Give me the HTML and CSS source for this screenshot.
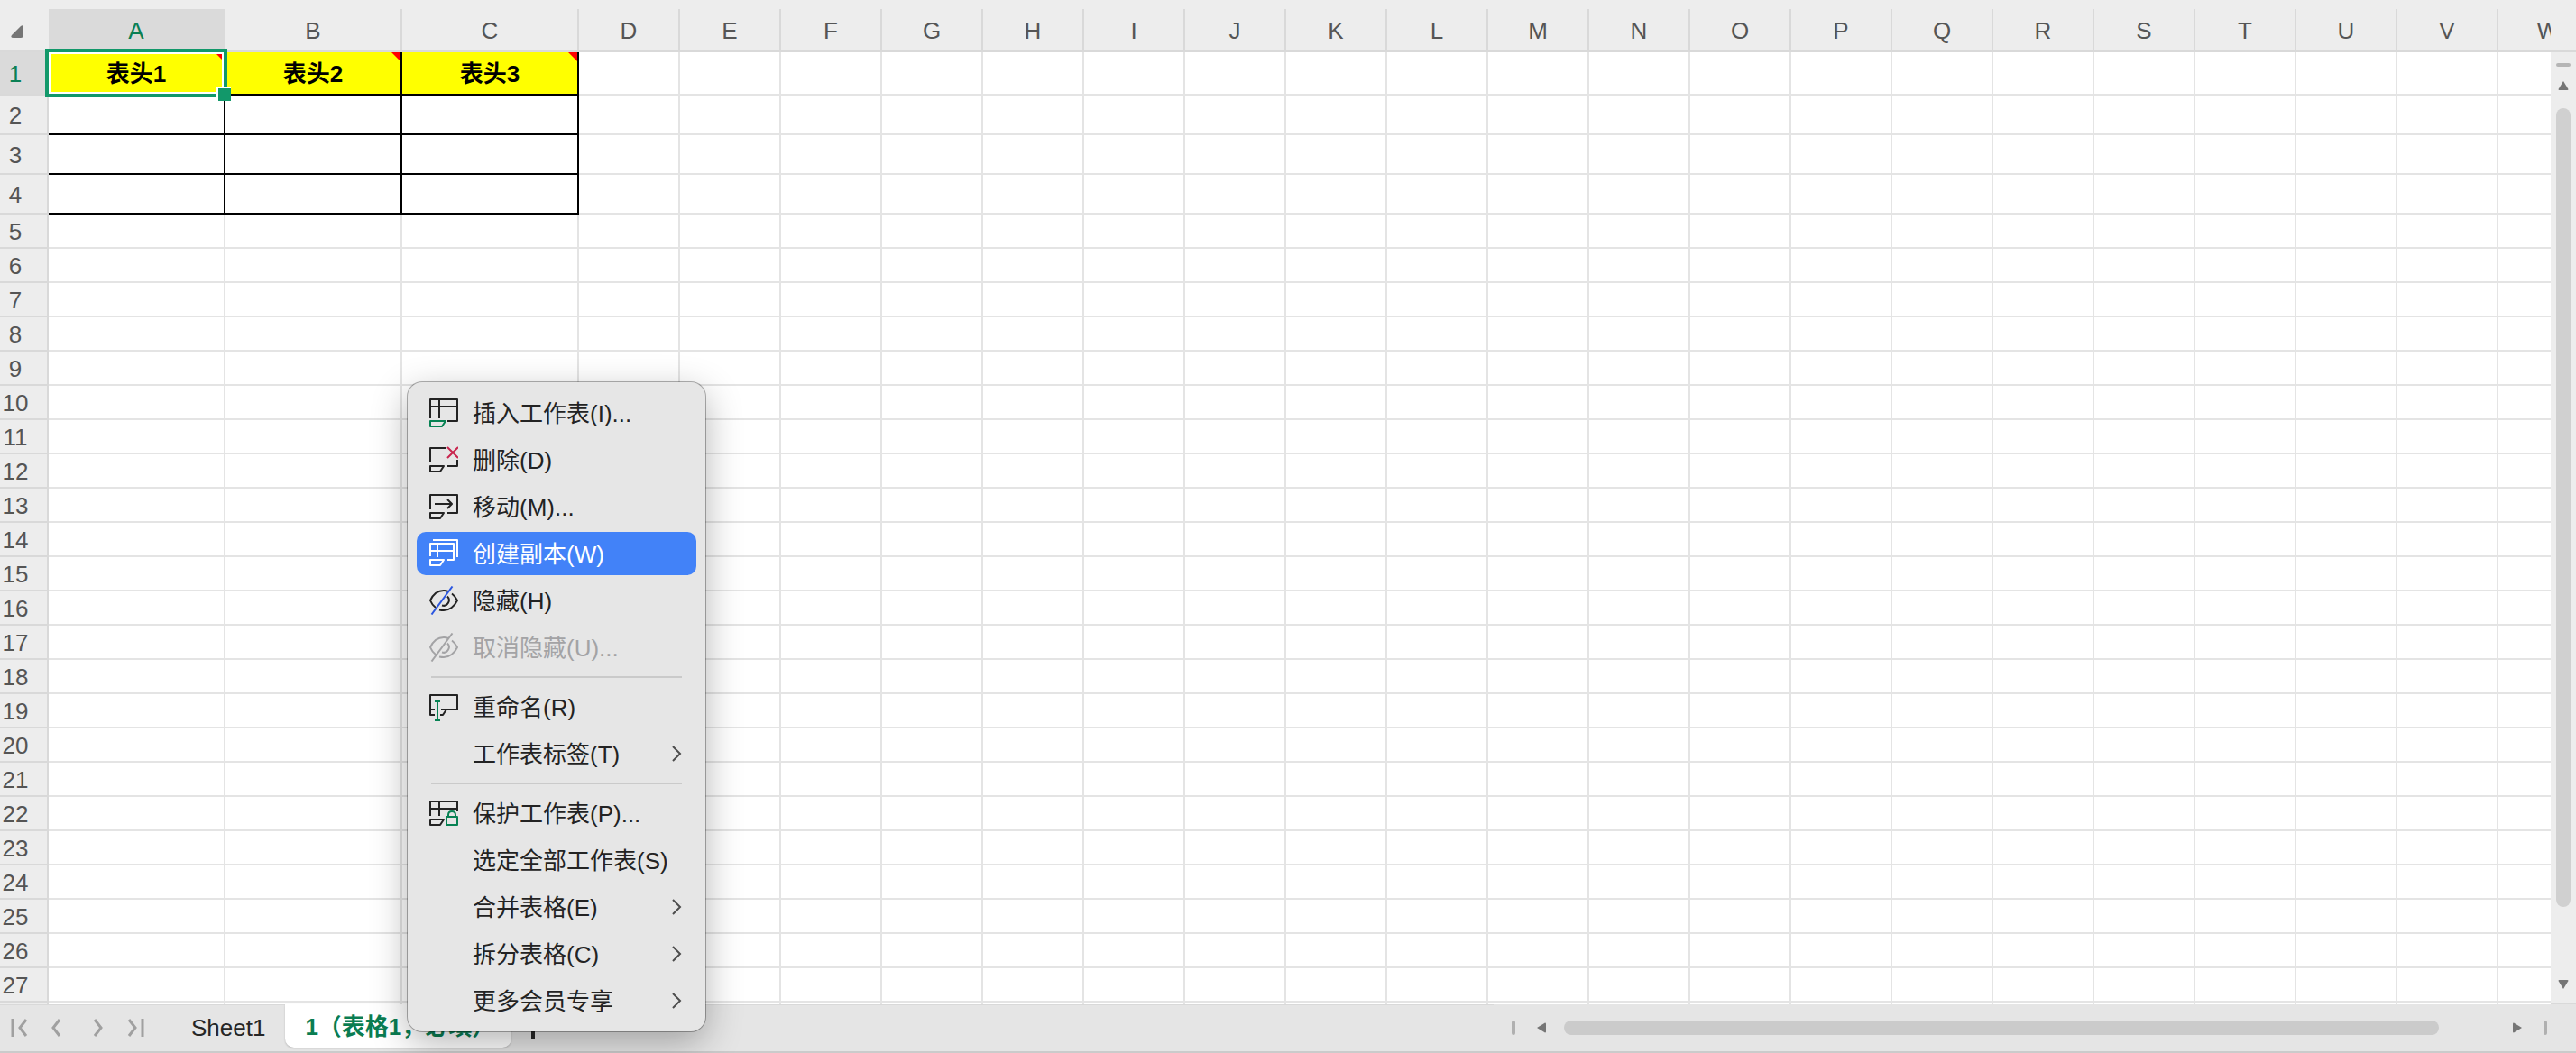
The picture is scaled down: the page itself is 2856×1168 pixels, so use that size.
FILE: index.html
```html
<!DOCTYPE html>
<html lang="zh-CN">
<head>
  <meta charset="UTF-8">
  <meta name="viewport" content="width=device-width, initial-scale=1">
  <title>工作表</title>
  <link rel="stylesheet" href="styles.css">
</head>

<body>

  <div class="workspace">
    <div class="sheet">
      <table class="grid" id="grid">
        <thead>
          <tr id="columnRow">
            <th class="corner">
              <svg width="14" height="14" viewBox="0 0 14 14"><path d="M11 1 Q14 -1 14 3 V11 Q14 14 11 14 H3 Q-1 14 1 11 Z" fill="#757575"/></svg>
            </th>
          </tr>
        </thead>
        <tbody id="rows"></tbody>
      </table>
    </div>

    <div class="vscroll">
      <div class="vscroll-head"></div>
      <div class="vscroll-body">
        <span class="split-h"></span>
        <button class="arrow" aria-label="向上滚动"><svg width="12" height="10" viewBox="0 0 12 10"><path d="M6 0 L11.500 9 Q11.500 10 10.500 10 H1.500 Q0.500 10 0.500 9 Z" fill="#757575"/></svg></button>
        <div class="vtrack"><div class="vthumb"></div></div>
        <button class="arrow" aria-label="向下滚动"><svg width="12" height="10" viewBox="0 0 12 10"><path d="M6 10 L11.500 1 Q11.500 0 10.500 0 H1.500 Q0.500 0 0.500 1 Z" fill="#757575"/></svg></button>
      </div>
    </div>
  </div>

  <div class="bottom-bar">
    <div class="tab-pane">
      <div class="tab-nav">
        <button aria-label="第一个工作表"><svg width="20" height="20" viewBox="0 0 20 20"><path d="M2 0 V20 M17 1 L10 10 L17 19"/></svg></button>
        <button aria-label="上一个工作表"><svg width="20" height="20" viewBox="0 0 20 20"><path d="M12 1 L5 10 L12 19"/></svg></button>
        <button aria-label="下一个工作表"><svg width="20" height="20" viewBox="0 0 20 20"><path d="M9 1 L16 10 L9 19"/></svg></button>
        <button aria-label="最后一个工作表"><svg width="20" height="20" viewBox="0 0 20 20"><path d="M5 1 L12 10 L5 19 M20 0 V20"/></svg></button>
      </div>
      <button class="tab">Sheet1</button>
      <button class="tab active">1（表格1，必填）</button>
      <button class="add-sheet" aria-label="新建工作表"><svg width="24" height="24" viewBox="0 0 24 24"><path d="M12 0 V24 M0 12 H24" stroke="#262626" stroke-width="4"/></svg></button>
    </div>
    <div class="hscroll">
      <span class="split-v"></span>
      <button class="arrow" aria-label="向左滚动"><svg width="10" height="12" viewBox="0 0 10 12"><path d="M0 6 L9 0.500 Q10 0.500 10 1.500 V10.500 Q10 11.500 9 11.500 Z" fill="#757575"/></svg></button>
      <div class="htrack"><div class="hthumb"></div></div>
      <button class="arrow" aria-label="向右滚动"><svg width="10" height="12" viewBox="0 0 10 12"><path d="M10 6 L1 0.500 Q0 0.500 0 1.500 V10.500 Q0 11.500 1 11.500 Z" fill="#757575"/></svg></button>
      <span class="split-v"></span>
    </div>
  </div>

  <div class="menu" role="menu">
    <button class="menu-item" role="menuitem">
      <svg class="icon" viewBox="0 0 32 32"><path d="M1 22 V1 H31 V25 H20 M1 9 H31 M11 1 V22"/><path class="green" d="M1 25 H18 L14 31 H1 Z"/></svg>
      <span>插入工作表(I)...</span>
    </button>
    <button class="menu-item" role="menuitem">
      <svg class="icon" viewBox="0 0 32 32"><path d="M1 19 V3 H18 M31 16 V23 H20 M1 23 H16 L12 29 H1 Z"/><path class="red" d="M20 2 L32 14 M32 2 L20 14"/></svg>
      <span>删除(D)</span>
    </button>
    <button class="menu-item" role="menuitem">
      <svg class="icon" viewBox="0 0 32 32"><path d="M1 19 V3 H31 V23 H20 M1 23 H16 L12 29 H1 Z M6 13 H25 M20 8 L25 13 L20 18"/></svg>
      <span>移动(M)...</span>
    </button>
    <button class="menu-item selected" role="menuitem">
      <svg class="icon" viewBox="0 0 32 32"><path d="M4 1 H31 V20 M1 19 V5 H27 V23 H20 M1 13 H27 M9 5 V20 M1 23 H16 L12 29 H1 Z"/></svg>
      <span>创建副本(W)</span>
    </button>
    <button class="menu-item" role="menuitem">
      <svg class="icon" viewBox="0 0 32 32"><path d="M21 6 Q18.500 5 16 5 C9 5 4 9.500 1 16 Q3 21 7 24 M25 8.500 Q29 11.500 31 16 C28 22.500 22 27 16 27 Q13.500 27 11 26.500 M20 11.500 A6 6 0 0 1 14 21.500"/><path class="blue" d="M25.500 0.500 L2.500 31.500"/></svg>
      <span>隐藏(H)</span>
    </button>
    <button class="menu-item" role="menuitem" disabled>
      <svg class="icon" viewBox="0 0 32 32"><path d="M21 6 Q18.500 5 16 5 C9 5 4 9.500 1 16 Q3 21 7 24 M25 8.500 Q29 11.500 31 16 C28 22.500 22 27 16 27 Q13.500 27 11 26.500 M20 11.500 A6 6 0 0 1 14 21.500 M25.500 0.500 L2.500 31.500"/></svg>
      <span>取消隐藏(U)...</span>
    </button>
    <hr>
    <button class="menu-item" role="menuitem">
      <svg class="icon" viewBox="0 0 32 32"><path d="M6 25 H1 V3 H31 V19 H13 M19 19 L15 25 H12 M1 19 H6"/><path class="green" d="M9 10 V31 M6 10 H12 M6 31 H12"/></svg>
      <span>重命名(R)</span>
    </button>
    <button class="menu-item" role="menuitem">
      <i class="icon"></i>
      <span>工作表标签(T)</span>
      <svg class="chevron" viewBox="0 0 12 20"><path d="M2 2 L10 10 L2 18"/></svg>
    </button>
    <hr>
    <button class="menu-item" role="menuitem">
      <svg class="icon" viewBox="0 0 32 32"><path d="M1 19 V3 H31 V14 M1 11 H31 M11 3 V19 M1 23 H16 L12 29 H1 Z"/><path class="green" d="M19 20 H31 V29 H19 Z M21 20 V18 Q21 14 25 14 Q29 14 29 18 V20"/></svg>
      <span>保护工作表(P)...</span>
    </button>
    <button class="menu-item" role="menuitem">
      <i class="icon"></i>
      <span>选定全部工作表(S)</span>
    </button>
    <button class="menu-item" role="menuitem">
      <i class="icon"></i>
      <span>合并表格(E)</span>
      <svg class="chevron" viewBox="0 0 12 20"><path d="M2 2 L10 10 L2 18"/></svg>
    </button>
    <button class="menu-item" role="menuitem">
      <i class="icon"></i>
      <span>拆分表格(C)</span>
      <svg class="chevron" viewBox="0 0 12 20"><path d="M2 2 L10 10 L2 18"/></svg>
    </button>
    <button class="menu-item" role="menuitem">
      <i class="icon"></i>
      <span>更多会员专享</span>
      <svg class="chevron" viewBox="0 0 12 20"><path d="M2 2 L10 10 L2 18"/></svg>
    </button>
  </div>

  <script src="script.js"></script>
</body>
</html>
```

FILE: styles.css
```css
* {
  box-sizing: border-box;
}

body {
  margin: 0;
  height: 100vh;
  overflow: hidden;
  display: flex;
  flex-direction: column;
  position: relative;
  background: #ededed;
  font-family: "Liberation Sans", "Noto Sans CJK SC", sans-serif;
  font-size: 26px;
  line-height: 32px;
}

button {
  font: inherit;
  color: inherit;
  background: none;
  border: none;
  padding: 0;
}

svg {
  display: block;
}

/* grid */
.workspace {
  flex: 1;
  min-height: 0;
  display: flex;
}

.sheet {
  flex: 1;
  min-width: 0;
  overflow: hidden;
  padding-top: 10px;
}

.grid {
  table-layout: fixed;
  width: 100%;
  border-collapse: separate;
  border-spacing: 0;
  background: white;
}

.grid th,
.grid td {
  width: 112px;
  height: 38px;
  padding: 2px 0 0;
  text-align: center;
  border-right: 2px solid #e4e4e4;
  border-bottom: 2px solid #e4e4e4;
}

.grid th {
  background: #ededed;
  color: #555;
  font-weight: normal;
  border-color: #d9d9d9;
}

.grid thead th {
  height: 48px;
}

.grid th.wide {
  width: 196px;
}

.grid .corner {
  width: 54px;
  border-right-color: #ededed;
  padding: 4px 0 0 12px;
}

.grid tbody th {
  padding-right: 18px;
}

.grid th.current {
  background: #dadada;
  color: #0a8055;
  border-right-color: #dadada;
}

.head-row td {
  height: 48px;
}

.grid .table-row td {
  height: 44px;
}

.grid td.framed {
  border-color: black;
}

.grid td.title {
  position: relative;
  background: yellow;
  font-weight: bold;
}

/* comment marker */
.title::after {
  content: "";
  position: absolute;
  top: 0;
  right: 0;
  border-top: 10px solid red;
  border-left: 10px solid transparent;
}

.selection {
  position: absolute;
  z-index: 1;
  top: -4px;
  left: -4px;
  right: -4px;
  bottom: -4px;
  border: 4px solid #12986a;
  box-shadow: inset 0 0 0 2px white;
}

.selection::after {
  content: "";
  position: absolute;
  right: -8px;
  bottom: -8px;
  width: 14px;
  height: 14px;
  background: #12986a;
  border-top: 2px solid white;
  border-left: 2px solid white;
}

/* vertical scroll bar */
.vscroll {
  width: 28px;
  display: flex;
  flex-direction: column;
}

.vscroll-head {
  height: 58px;
  border-bottom: 2px solid #d9d9d9;
}

.vscroll-body {
  flex: 1;
  min-height: 0;
  display: flex;
  flex-direction: column;
  align-items: center;
  padding: 12px 0 16px;
  border-bottom: 1px solid #d9d9d9;
}

.split-h {
  width: 16px;
  height: 4px;
  border-radius: 2px;
  background: #b5b5b5;
  margin-bottom: 16px;
}

.vtrack {
  flex: 1;
  width: 16px;
  margin: 20px 0 4px;
}

.vthumb {
  height: 92%;
  border-radius: 8px;
  background: #d0d0d0;
}

/* bottom bar */
.bottom-bar {
  height: 54px;
  display: flex;
  background: #e5e5e5;
  border-bottom: 2px solid #cbcbcb;
}

.tab-pane {
  width: 58%;
  display: flex;
  align-items: flex-start;
  border-top: 1px solid #d9d9d9;
}

.tab-nav {
  display: flex;
  gap: 22px;
  padding: 15px 32px 0 12px;
}

.tab-nav svg {
  overflow: visible;
}

.tab-nav path {
  fill: none;
  stroke: #a0a0a0;
  stroke-width: 3;
}

.tab {
  height: 48px;
  padding: 2px 22px 0;
  color: #262626;
}

.tab.active {
  background: white;
  color: #0a7d52;
  font-weight: bold;
  padding-right: 18px;
  border-radius: 0 0 10px 10px;
  box-shadow: 0 1px 2px rgba(0, 0, 0, 0.2);
  margin-top: -1px;
}

.add-sheet {
  padding: 13px 12px;
}

.hscroll {
  flex: 1;
  display: flex;
  align-items: center;
  padding: 0 32px 0 20px;
}

.split-v {
  width: 4px;
  height: 16px;
  border-radius: 2px;
  background: #b0b0b0;
}

.split-v:first-child {
  margin-right: 24px;
}

.split-v:last-child {
  margin-left: 24px;
}

.htrack {
  flex: 1;
  margin: 0 20px;
}

.hthumb {
  width: 94%;
  height: 16px;
  border-radius: 8px;
  background: #cbcbcb;
}

/* sheet context menu */
.menu {
  position: absolute;
  left: 452px;
  bottom: 24px;
  z-index: 2;
  width: 330px;
  padding: 10px;
  display: flex;
  flex-direction: column;
  gap: 4px;
  background: #e6e6e6;
  border-radius: 16px;
  box-shadow: 0 0 0 1px rgba(0, 0, 0, 0.3), 0 12px 40px rgba(0, 0, 0, 0.3);
  color: #232323;
}

.menu-item {
  height: 48px;
  padding: 0 16px 0 14px;
  display: flex;
  align-items: center;
  gap: 16px;
  border-radius: 10px;
  text-align: left;
  white-space: nowrap;
}

.menu-item span {
  padding-top: 2px;
}

.menu-item.selected {
  background: #4282f8;
  color: white;
}

.menu-item:disabled {
  color: #a3a3a5;
}

.menu hr {
  width: 278px;
  height: 2px;
  margin: 4px auto;
  border: none;
  background: #cacaca;
}

.icon {
  flex: none;
  width: 32px;
  height: 32px;
  fill: none;
  stroke: currentColor;
  stroke-width: 2;
  stroke-linejoin: round;
}

.icon .green {
  stroke: #078253;
}

.icon .red {
  stroke: #c9254e;
}

.icon .blue {
  stroke: #2a56e0;
}

.chevron {
  width: 12px;
  height: 20px;
  margin-left: auto;
  fill: none;
  stroke: #4c4c4c;
  stroke-width: 2;
}
```

FILE: script.js
```js
const columns = "ABCDEFGHIJKLMNOPQRSTUVW".split("");
const titles = ["表头1", "表头2", "表头3"];
const rowCount = 27;

const columnRow = document.getElementById("columnRow");
columns.forEach(function (name, i) {
  const th = document.createElement("th");
  th.textContent = name;
  if (i < titles.length) th.classList.add("wide");
  if (i === 0) th.classList.add("current");
  columnRow.appendChild(th);
});

// one extra row without a number fills the strip above the tabs
const rows = document.getElementById("rows");
for (let r = 1; r <= rowCount + 1; r++) {
  const tr = document.createElement("tr");
  if (r === 1) tr.className = "head-row";
  else if (r <= 4) tr.className = "table-row";

  const th = document.createElement("th");
  if (r <= rowCount) th.textContent = r;
  if (r === 1) th.className = "current";
  tr.appendChild(th);

  for (let c = 0; c < columns.length; c++) {
    const td = document.createElement("td");
    if (r <= 4 && c < titles.length) td.classList.add("framed");
    if (r === 1 && c < titles.length) {
      td.classList.add("title");
      td.textContent = titles[c];
    }
    if (r === 1 && c === 0) {
      const box = document.createElement("div");
      box.className = "selection";
      td.appendChild(box);
    }
    tr.appendChild(td);
  }
  rows.appendChild(tr);
}
```
